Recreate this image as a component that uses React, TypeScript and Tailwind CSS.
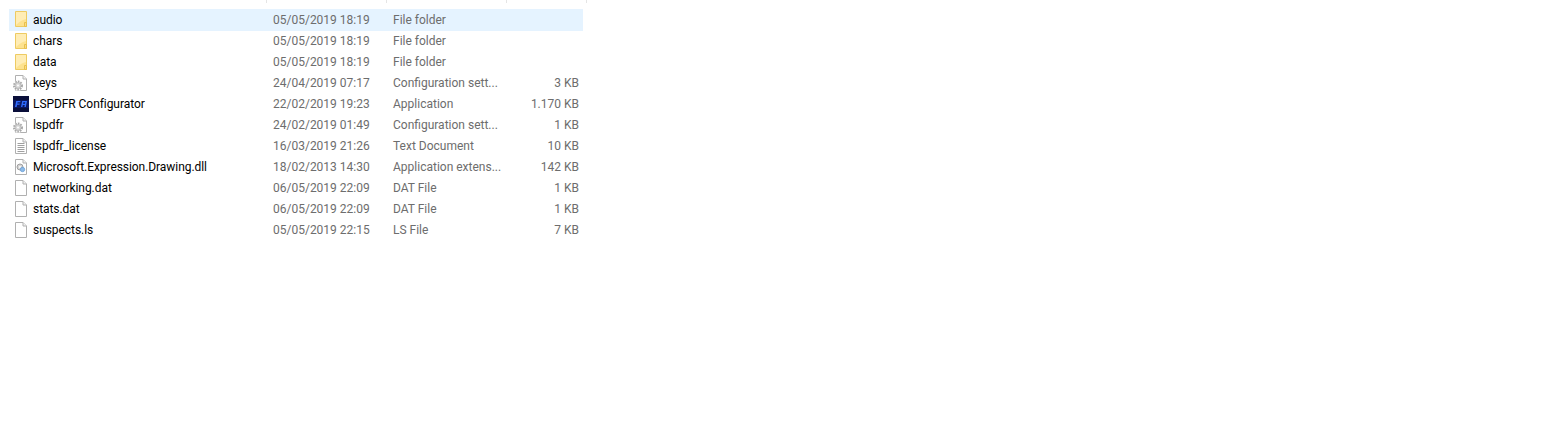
import React from "react";

type Kind = "folder" | "config" | "app" | "text" | "dll" | "file";

type Row = { name: string; date: string; type: string; size: string; kind: Kind };

const rows: Row[] = [
  { name: "audio", date: "05/05/2019 18:19", type: "File folder", size: "", kind: "folder" },
  { name: "chars", date: "05/05/2019 18:19", type: "File folder", size: "", kind: "folder" },
  { name: "data", date: "05/05/2019 18:19", type: "File folder", size: "", kind: "folder" },
  { name: "keys", date: "24/04/2019 07:17", type: "Configuration sett...", size: "3 KB", kind: "config" },
  { name: "LSPDFR Configurator", date: "22/02/2019 19:23", type: "Application", size: "1.170 KB", kind: "app" },
  { name: "lspdfr", date: "24/02/2019 01:49", type: "Configuration sett...", size: "1 KB", kind: "config" },
  { name: "lspdfr_license", date: "16/03/2019 21:26", type: "Text Document", size: "10 KB", kind: "text" },
  { name: "Microsoft.Expression.Drawing.dll", date: "18/02/2013 14:30", type: "Application extens...", size: "142 KB", kind: "dll" },
  { name: "networking.dat", date: "06/05/2019 22:09", type: "DAT File", size: "1 KB", kind: "file" },
  { name: "stats.dat", date: "06/05/2019 22:09", type: "DAT File", size: "1 KB", kind: "file" },
  { name: "suspects.ls", date: "05/05/2019 22:15", type: "LS File", size: "7 KB", kind: "file" },
];

function PageShape({ children }: { children?: React.ReactNode }) {
  return (
    <svg width="16" height="16" viewBox="0 0 16 16">
      <path d="M2.5 0.5H10L13.5 4V15.5H2.5Z" fill="#ffffff" stroke="#b0b0b0" />
      <path d="M10 0.5V4H13.5" fill="#f2f2f2" stroke="#b0b0b0" />
      {children}
    </svg>
  );
}

function FileIcon({ kind }: { kind: Kind }) {
  if (kind === "folder") {
    return (
      <svg width="16" height="16" viewBox="0 0 16 16">
        <path d="M2.5 0.5H13.5V15.5H2.5Z" fill="#fde28f" stroke="#eecb62" />
        <path d="M3 1H13V8Q8 9 3 14Z" fill="#ffedb5" />
        <path d="M11.5 15.5V11.5H13.5V15.5Z" fill="#fbdc82" stroke="#e8c04f" />
      </svg>
    );
  }
  if (kind === "app") {
    return (
      <svg width="16" height="16" viewBox="0 0 16 16">
        <rect width="16" height="16" fill="#0a0f3a" />
        <rect y="4" width="16" height="8" fill="#0c1760" />
        <path d="M2 11L3.2 5H7.5L7.2 6.3H4.6L4.3 7.6H6.8L6.5 8.8H4.1L3.6 11Z" fill="#2f6bff" />
        <path d="M8 11L9.2 5H14L12.8 11H11.4L11.8 8.9H9.8L9.4 11ZM10 7.8H12L12.3 6.2H10.4Z" fill="#2f6bff" />
      </svg>
    );
  }
  if (kind === "config") {
    return (
      <PageShape>
        <circle cx="5" cy="10.5" r="5.2" fill="#ffffff" />
        <circle cx="5" cy="10.5" r="4" fill="none" stroke="#a8a8a8" strokeWidth="2" strokeDasharray="1.6 1" />
        <circle cx="5" cy="10.5" r="3" fill="#d8d8d8" stroke="#b0b0b0" strokeWidth="0.8" />
        <circle cx="5" cy="10.5" r="1" fill="#ffffff" />
      </PageShape>
    );
  }
  if (kind === "text") {
    return (
      <PageShape>
        <path d="M4.5 5.5H11.5M4.5 7.5H11.5M4.5 9.5H11.5M4.5 11.5H11.5M4.5 13.5H11.5" stroke="#a0a0a0" />
      </PageShape>
    );
  }
  if (kind === "dll") {
    return (
      <PageShape>
        <circle cx="7" cy="8" r="3" fill="#d4d4d4" stroke="#a0a0a0" />
        <circle cx="7" cy="8" r="1" fill="#ffffff" />
        <circle cx="9.5" cy="10.5" r="2.2" fill="#8fbbe8" stroke="#5b97d1" strokeWidth="0.7" />
      </PageShape>
    );
  }
  return <PageShape />;
}

export default function App() {
  return (
    <div className="min-h-[423px] bg-white pl-[9px] text-[12px] font-['Roboto',sans-serif]">
      <div className="flex h-[3px] w-[578px]">
        <div className="w-[258px] border-r border-[#e5e5e5]" />
        <div className="w-[120px] border-r border-[#e5e5e5]" />
        <div className="w-[120px] border-r border-[#e5e5e5]" />
        <div className="w-[80px] border-r border-[#e5e5e5]" />
      </div>
      <div className="w-[574px] pt-[6px]">
        {rows.map((row, i) => (
          <div
            key={row.name}
            className={`flex items-center leading-[21px] ${i === 0 ? "h-[22px] bg-[#e5f3ff]" : "h-[21px]"}`}
          >
            <div className="flex w-[264px] items-center gap-[4px] pl-[4px] text-black">
              <span className="mb-[2px] shrink-0">
                <FileIcon kind={row.kind} />
              </span>
              <span className="whitespace-nowrap tracking-[-0.06px]">{row.name}</span>
            </div>
            <div className="w-[120px] whitespace-nowrap text-[#6d6d6d]">{row.date}</div>
            <div className="w-[120px] whitespace-nowrap text-[#6d6d6d]">{row.type}</div>
            <div className="w-[66px] whitespace-nowrap text-right text-[#6d6d6d]">{row.size}</div>
          </div>
        ))}
      </div>
    </div>
  );
}
